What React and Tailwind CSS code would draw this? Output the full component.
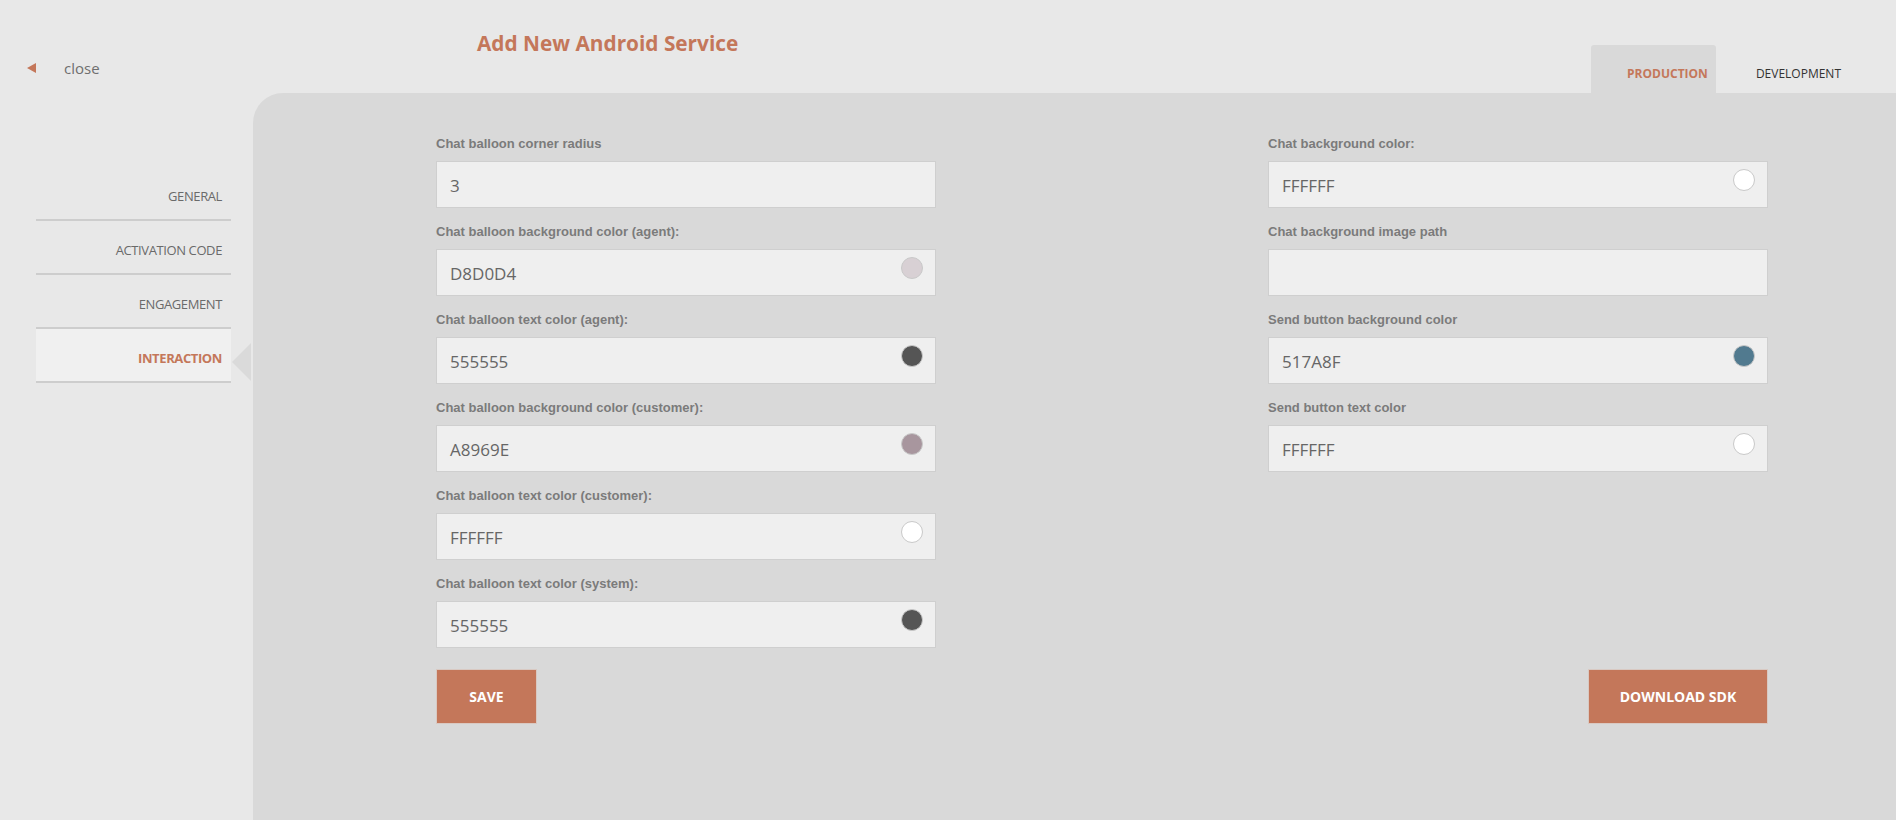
import React from 'react';

const LEFT_FIELDS = [
    { label: 'Chat balloon corner radius', value: '3' },
    { label: 'Chat balloon background color (agent):', value: 'D8D0D4', swatch: '#D8D0D4' },
    { label: 'Chat balloon text color (agent):', value: '555555', swatch: '#555555' },
    { label: 'Chat balloon background color (customer):', value: 'A8969E', swatch: '#A8969E' },
    { label: 'Chat balloon text color (customer):', value: 'FFFFFF', swatch: '#FFFFFF' },
    { label: 'Chat balloon text color (system):', value: '555555', swatch: '#555555' }
];

const RIGHT_FIELDS = [
    { label: 'Chat background color:', value: 'FFFFFF', swatch: '#FFFFFF' },
    { label: 'Chat background image path', value: '' },
    { label: 'Send button background color', value: '517A8F', swatch: '#517A8F' },
    { label: 'Send button text color', value: 'FFFFFF', swatch: '#FFFFFF' }
];

const MENU = ['GENERAL', 'ACTIVATION CODE', 'ENGAGEMENT', 'INTERACTION'];

function Field({ label, value, swatch }) {
    return (
        <div className="mb-[16px]">
            <label className="block mb-[9px] h-[16px] text-[13px] leading-[16px] font-bold text-[#7b7b7b] font-['Liberation_Sans',Arial,sans-serif]">
                {label}
            </label>
            <div className="h-[47px] bg-[#efefef] border border-[#cfcfcf] flex items-start justify-between pl-[13px] pr-[12px]">
                <span className="pt-[12px] text-[17px] leading-[24px] text-[#666]">{value}</span>
                {swatch && (
                    <span
                        className="mt-[7px] w-[22px] h-[22px] rounded-full border border-[#c9c9c9]"
                        style={{ backgroundColor: swatch }}
                    />
                )}
            </div>
        </div>
    );
}

export default function App() {
    const active = 'INTERACTION';

    return (
        <div className="h-screen w-full overflow-hidden bg-[#e8e8e8] flex flex-col font-['Open_Sans',sans-serif]">
            {/* Header */}
            <div className="h-[93px] flex shrink-0">
                <div className="w-[253px] pl-[27px] pt-[58px]">
                    <button className="flex items-center">
                        <span className="w-0 h-0 border-y-[5px] border-y-transparent border-r-[9px] border-r-[#c4775a]" />
                        <span className="ml-[28px] text-[15px] leading-[20px] text-[#6f6f6f]">close</span>
                    </button>
                </div>
                <h1 className="ml-[224px] pt-[29px] text-[20.8px] leading-[28px] font-bold text-[#c4775a]">
                    Add New Android Service
                </h1>
                <div className="flex-1" />
                <div className="flex items-end self-end mr-[55px]">
                    <div className="w-[125px] h-[48px] bg-[#d9d9d9] rounded-t-[3px] flex justify-end pr-[8px] pt-[21px]">
                        <span className="block text-[12px] leading-[16px] font-bold text-[#c4775a]">PRODUCTION</span>
                    </div>
                    <div className="ml-[40px] h-[48px] flex pt-[21px]">
                        <span className="block text-[12px] leading-[16px] text-[#333]">DEVELOPMENT</span>
                    </div>
                </div>
            </div>

            {/* Body */}
            <div className="flex flex-1">
                <div className="w-[253px] shrink-0 pt-[74px] pl-[36px]">
                    <div className="w-[195px]">
                        {MENU.map((item) => (
                            <div
                                key={item}
                                className={`relative h-[54px] border-b-2 border-[#cdcdcd] flex items-center justify-end pr-[9px] pt-[8px] ${item === active ? 'bg-[#f0f0f0]' : ''}`}
                            >
                                <span
                                    className={`text-[13px] tracking-[-0.03em] ${item === active ? 'font-bold text-[#c4775a]' : 'text-[#6a6a6a]'}`}
                                >
                                    {item}
                                </span>
                                {item === active && (
                                    <span className="absolute left-[196px] top-[14px] w-0 h-0 border-y-[19px] border-y-transparent border-r-[19px] border-r-[#dadada]" />
                                )}
                            </div>
                        ))}
                    </div>
                </div>

                <div className="flex-1 bg-[#d9d9d9] rounded-tl-[30px] pl-[183px] pt-[43px]">
                    <div className="w-[1332px]">
                        <div className="flex justify-between">
                            <div className="w-[500px]">
                                {LEFT_FIELDS.map((f) => (
                                    <Field key={f.label} {...f} />
                                ))}
                            </div>
                            <div className="w-[500px]">
                                {RIGHT_FIELDS.map((f) => (
                                    <Field key={f.label} {...f} />
                                ))}
                            </div>
                        </div>
                        <div className="mt-[5px] flex justify-between">
                            <button className="w-[101px] h-[55px] bg-[#c4775a] border border-[#d9c9c2] text-white text-[14px] font-bold">
                                SAVE
                            </button>
                            <button className="w-[180px] h-[55px] bg-[#c4775a] border border-[#d9c9c2] text-white text-[14px] font-bold">
                                DOWNLOAD SDK
                            </button>
                        </div>
                    </div>
                </div>
            </div>
        </div>
    );
}
